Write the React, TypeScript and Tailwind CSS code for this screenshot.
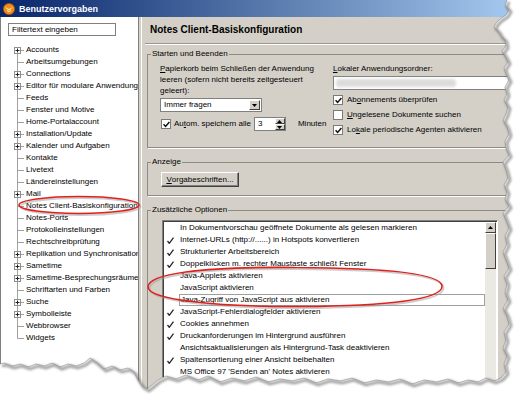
import React from 'react';

// Baumeinträge links: [Titel, hat Unterpunkte]
const treeItems: [string, boolean][] = [
  ['Accounts', true],
  ['Arbeitsumgebungen', false],
  ['Connections', true],
  ['Editor für modulare Anwendungen', true],
  ['Feeds', false],
  ['Fenster und Motive', false],
  ['Home-Portalaccount', false],
  ['Installation/Update', true],
  ['Kalender und Aufgaben', true],
  ['Kontakte', false],
  ['Livetext', false],
  ['Ländereinstellungen', false],
  ['Mail', true],
  ['Notes Client-Basiskonfiguration', false],
  ['Notes-Ports', false],
  ['Protokolleinstellungen', false],
  ['Rechtschreibprüfung', false],
  ['Replikation und Synchronisation', true],
  ['Sametime', true],
  ['Sametime-Besprechungsräume', true],
  ['Schriftarten und Farben', false],
  ['Suche', true],
  ['Symbolleiste', true],
  ['Webbrowser', false],
  ['Widgets', false],
];

const options: [string, boolean][] = [
  ['In Dokumentvorschau geöffnete Dokumente als gelesen markieren', false],
  ['Internet-URLs (http://......) in Hotspots konvertieren', true],
  ['Strukturierter Arbeitsbereich', true],
  ['Doppelklicken m. rechter Maustaste schließt Fenster', true],
  ['Java-Applets aktivieren', false],
  ['JavaScript aktivieren', false],
  ['Java-Zugriff von JavaScript aus aktivieren', false],
  ['JavaScript-Fehlerdialogfelder aktivieren', true],
  ['Cookies annehmen', true],
  ['Druckanforderungen im Hintergrund ausführen', true],
  ['Ansichtsaktualisierungen als Hintergrund-Task deaktivieren', false],
  ['Spaltensortierung einer Ansicht beibehalten', true],
  ["MS Office 97 'Senden an' Notes aktivieren", false],
];

function TreeRow({ label, plus, first, last }: { label: string; plus: boolean; first: boolean; last: boolean }) {
  return (
    <div className="flex h-[12px] items-center whitespace-nowrap">
      <svg width="25" height="12" className="shrink-0">
        <line x1="16.5" y1={first ? 6 : 0} x2="16.5" y2={last ? 6.5 : 12} stroke="#a0a0a0" />
        <line x1="16.5" y1="6.5" x2="23" y2="6.5" stroke="#a0a0a0" />
        {plus && (
          <g>
            <rect x="13.5" y="3.5" width="6" height="6" fill="#fff" stroke="#909090" />
            <line x1="14.5" y1="6.5" x2="18.5" y2="6.5" stroke="#222" />
            <line x1="16.5" y1="4.5" x2="16.5" y2="8.5" stroke="#222" />
          </g>
        )}
      </svg>
      <span>{label}</span>
    </div>
  );
}

function CheckBox({ checked }: { checked?: boolean }) {
  return (
    <span className="flex h-[10px] w-[10px] shrink-0 items-center justify-center border border-[#7a7a7a] bg-white">
      {checked && (
        <svg width="7" height="7" viewBox="0 0 7 7">
          <path d="M0.6 3.2 L2.6 5.4 L6.4 1" stroke="#111" strokeWidth="1.5" fill="none" />
        </svg>
      )}
    </span>
  );
}

function Tick() {
  return (
    <svg width="7" height="7" viewBox="0 0 7 7">
      <path d="M0.5 4 L2.3 6.3 L6.5 0.7" stroke="#222" strokeWidth="1.3" fill="none" />
    </svg>
  );
}

function Arrow({ up }: { up?: boolean }) {
  return (
    <svg width="5" height="3" viewBox="0 0 5 3">
      <path d={up ? 'M0 3 L2.5 0 L5 3 Z' : 'M0 0 L5 0 L2.5 3 Z'} fill="#000" />
    </svg>
  );
}

function TitleBar() {
  return (
    <div className="flex h-[17px] items-center gap-[4px] bg-linear-to-r from-[#0a246a] via-[#5577aa] to-[#a6caf0] pl-[3px]">
      <svg width="12" height="12" viewBox="0 0 12 12">
        <circle cx="6" cy="6" r="5.6" fill="#f28c14" stroke="#b35a00" strokeWidth="0.6" />
        <path d="M3 4.5 Q6 8.5 9 4.5 M4 7.5 Q6 9.5 8 7.5" stroke="#fff4d0" strokeWidth="1" fill="none" />
      </svg>
      <span className="text-[9px] font-bold text-white">Benutzervorgaben</span>
    </div>
  );
}

function LeftPane() {
  return (
    <div className="flex w-[138px] shrink-0 flex-col overflow-hidden border-l border-[#808080] bg-white">
      <div className="ml-[7px] mt-[6px] flex h-[13px] w-[108px] items-center border border-[#808080] pl-[3px]">
        Filtertext eingeben
      </div>
      <div className="mt-[8px]">
        {treeItems.map(([label, plus], i) => (
          <TreeRow key={label} label={label} plus={plus} first={i === 0} last={i === treeItems.length - 1} />
        ))}
      </div>
    </div>
  );
}

function Group({ title, className, children }: { title: string; className?: string; children: React.ReactNode }) {
  return (
    <fieldset className={`mr-[4px] border border-[#8e8b84] shadow-[1px_1px_0_#fff] ${className ?? ''}`}>
      <legend className="ml-[3px] px-[1px] leading-[12px]">{title}</legend>
      {children}
    </fieldset>
  );
}

function RightPane() {
  return (
    <div className="flex min-w-0 flex-1 flex-col overflow-hidden bg-[#d4d0c8]">
      <div className="flex h-[27px] shrink-0 items-center border-b border-[#9a978f] pl-[5px] shadow-[0_1px_0_#fff]">
        <span className="text-[10px] font-bold">Notes Client-Basiskonfiguration</span>
      </div>

      <div className="ml-[2px] flex flex-col">
        <Group title="Starten und Beenden" className="mt-[4px] h-[100px]">
          <div className="flex pl-[12px] pt-[3px]">
            <div className="w-[173px] shrink-0">
              <p className="leading-[11px]">
                <span className="underline">P</span>apierkorb beim Schließen der Anwendung
                <br />
                leeren (sofern nicht bereits zeitgesteuert
                <br />
                geleert):
              </p>
              <div className="mt-[2px] flex h-[14px] w-[102px] items-center border border-[#808080] bg-white">
                <span className="flex-1 pl-[3px]">Immer fragen</span>
                <span className="mr-[1px] flex h-[10px] w-[11px] items-center justify-center border border-b-[#404040] border-l-white border-r-[#404040] border-t-white bg-[#d4d0c8]">
                  <Arrow />
                </span>
              </div>
              <div className="mt-[5px] flex h-[14px] items-center">
                <span className="ml-[1px]">
                  <CheckBox checked />
                </span>
                <span className="ml-[3px]">
                  Au<span className="underline">t</span>om. speichern alle
                </span>
                <div className="ml-[3px] flex h-[14px] w-[32px] border border-[#808080] bg-white">
                  <span className="flex flex-1 items-center pl-[3px]">3</span>
                  <div className="flex w-[10px] flex-col">
                    <span className="flex flex-1 items-center justify-center border border-b-[#404040] border-l-white border-r-[#404040] border-t-white bg-[#d4d0c8]">
                      <Arrow up />
                    </span>
                    <span className="flex flex-1 items-center justify-center border border-b-[#404040] border-l-white border-r-[#404040] border-t-white bg-[#d4d0c8]">
                      <Arrow />
                    </span>
                  </div>
                </div>
                <span className="ml-[12px]">Minuten</span>
              </div>
            </div>
            <div className="min-w-0 flex-1">
              <p className="leading-[11px]">
                <span className="underline">L</span>okaler Anwendungsordner:
              </p>
              <div className="mt-[2px] flex h-[14px] items-center border border-[#808080] bg-white pl-[2px]">
                <span className="h-[8px] w-[120px] rounded-[3px] bg-[#dcdcdc] blur-[1.5px]" />
              </div>
              <div className="mt-[3px] flex h-[14px] items-center gap-[4px]">
                <CheckBox checked />
                <span>
                  Ab<span className="underline">o</span>nnements überprüfen
                </span>
              </div>
              <div className="mt-[1px] flex h-[14px] items-center gap-[4px]">
                <CheckBox />
                <span>
                  <span className="underline">U</span>ngelesene Dokumente suchen
                </span>
              </div>
              <div className="mt-[1px] flex h-[14px] items-center gap-[4px]">
                <CheckBox checked />
                <span>
                  Lo<span className="underline">k</span>ale periodische Agenten aktivieren
                </span>
              </div>
            </div>
          </div>
        </Group>

        <Group title="Anzeige" className="mt-[8px] h-[40px]">
          <div className="pl-[13px] pt-[4px]">
            <button className="flex h-[15px] w-[78px] items-center justify-center border border-b-[#404040] border-l-white border-r-[#404040] border-t-white bg-[#d4d0c8] shadow-[inset_-1px_-1px_0_#808080]">
              <span className="underline">V</span>orgabeschriften...
            </button>
          </div>
        </Group>

        <Group title="Zusätzliche Optionen" className="mt-[8px] h-[200px]">
          <div className="pl-[14px] pt-[4px]">
            <div className="flex h-[180px] w-[336px] border border-b-white border-l-[#808080] border-r-white border-t-[#808080] bg-white shadow-[inset_1px_1px_0_#404040]">
              <div className="flex-1 pl-[4px] pt-[1px]">
                {options.map(([label, checked], i) => (
                  <div key={label} className="flex h-[12px] items-center">
                    <span className="flex w-[12px] shrink-0 items-center">{checked && <Tick />}</span>
                    <span
                      className={`flex h-[12px] flex-1 items-center whitespace-nowrap pl-[1px] ${
                        i === 6 ? 'border border-[#a0a0a0]' : ''
                      }`}
                    >
                      {label}
                    </span>
                  </div>
                ))}
              </div>
              <div className="mr-[1px] mt-[1px] flex w-[11px] flex-col">
                <span className="flex h-[11px] items-center justify-center border border-b-[#404040] border-l-white border-r-[#404040] border-t-white bg-[#d4d0c8]">
                  <Arrow up />
                </span>
                <span className="h-[36px] border border-b-[#404040] border-l-white border-r-[#404040] border-t-white bg-[#d4d0c8]" />
                <span className="flex-1 bg-[#ebe9e4]" />
              </div>
            </div>
          </div>
        </Group>
      </div>
    </div>
  );
}

function Annotations() {
  const java =
    'M295 267.5 C 200 266.5, 148 274, 148 287 C 148 300, 220 307, 300 306.5 C 390 306, 443 299, 442 286 C 441 273, 380 268, 295 267.5';
  return (
    <svg className="pointer-events-none absolute inset-0" width="517" height="394">
      <g fill="none" strokeWidth="2" stroke="#9a9a9a" opacity="0.5" transform="translate(1.5 1.5)">
        <ellipse cx="79" cy="205" rx="60" ry="8.5" />
        <path d={java} />
      </g>
      <g fill="none" strokeWidth="1.6" stroke="#e0201c">
        <ellipse cx="79" cy="205" rx="60" ry="8.5" />
        <path d={java} />
      </g>
    </svg>
  );
}

// Abriss-Kante rechts und unten
const rightEdge = [
  [507, 0], [505, 5], [509, 10], [506, 15], [500, 19], [496, 23], [494, 27], [498, 31], [501, 36], [505, 40],
  [506, 46], [502, 51], [505, 56], [508, 62], [504, 68], [506, 74], [509, 80], [505, 87], [507, 94], [504, 100],
  [508, 107], [506, 114], [503, 120], [507, 127], [509, 134], [505, 141], [506, 148], [509, 155], [503, 162],
  [506, 170], [508, 178], [504, 185], [507, 192], [505, 199], [509, 206], [503, 213], [506, 220], [509, 228],
  [505, 236], [507, 244], [503, 252], [506, 260], [509, 268], [504, 276], [507, 284], [505, 292], [508, 300],
  [503, 308], [507, 316], [509, 324], [504, 332], [506, 340], [503, 348], [507, 356], [504, 364], [506, 372],
  [501, 378],
];
const bottomEdge = [
  [494, 381], [486, 378], [478, 382], [468, 380], [458, 383], [448, 379], [436, 382], [424, 380], [412, 384],
  [400, 379], [388, 382], [376, 380], [364, 383], [352, 378], [340, 381], [328, 379], [316, 383], [304, 378],
  [292, 381], [280, 379], [268, 382], [256, 377], [244, 381], [232, 378], [220, 382], [208, 376], [198, 380],
  [186, 375], [176, 379], [166, 376], [158, 380], [152, 385], [147, 389], [142, 386], [138, 380], [134, 372],
  [128, 368], [120, 370], [112, 366], [104, 369], [96, 362], [90, 358], [84, 363], [76, 366], [68, 364],
  [60, 367], [52, 363], [44, 366], [36, 364], [28, 367], [20, 364], [12, 366], [4, 363], [0, 364],
];

function TornEdge() {
  const pts = [...rightEdge, ...bottomEdge];
  const line = pts.map(([x, y], i) => `${i ? 'L' : 'M'}${x} ${y}`).join(' ');
  const outside = `${line} L0 394 L517 394 L517 0 Z`;
  return (
    <svg className="pointer-events-none absolute inset-0" width="517" height="394">
      <defs>
        <filter id="blur" x="-5%" y="-5%" width="110%" height="110%">
          <feGaussianBlur stdDeviation="1.3" />
        </filter>
      </defs>
      <path d={outside} fill="#fff" />
      <path d={line} fill="none" stroke="#6a6a6a" strokeWidth="3" opacity="0.6" filter="url(#blur)" transform="translate(2 2)" />
      <path d={line} fill="none" stroke="#8a8a8a" strokeWidth="0.6" />
    </svg>
  );
}

export default function App() {
  return (
    <div className="relative h-[394px] w-[517px] overflow-hidden bg-white font-['Liberation_Sans',Arial,sans-serif] text-[8px] leading-[12px] text-black">
      <TitleBar />
      <div className="flex h-[377px]">
        <LeftPane />
        <div className="flex w-[7px] shrink-0 bg-[#d4d0c8]">
          <span className="w-[1px] bg-[#808080]" />
          <span className="w-[2px]" />
          <span className="w-[1px] bg-white" />
        </div>
        <RightPane />
      </div>
      <Annotations />
      <TornEdge />
    </div>
  );
}
